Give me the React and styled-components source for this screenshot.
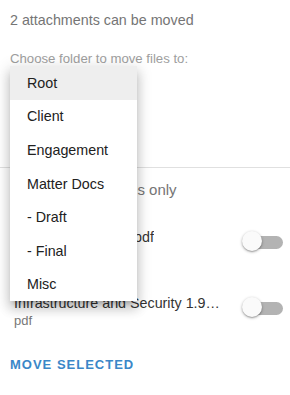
import styled, { createGlobalStyle } from 'styled-components';

const GlobalStyle = createGlobalStyle`
  html, body {
    margin: 0;
    padding: 0;
    background: #ffffff;
    font-family: "Liberation Sans", Arial, sans-serif;
  }
`;

const Page = styled.div`
  position: relative;
  width: 290px;
  height: 395px;
  overflow: hidden;
  background: #fff;
`;

const Section = styled.div`
  padding: 0 10px;
`;

const Summary = styled.div`
  padding-top: 12px;
  font-size: 14.3px;
  line-height: 16px;
  color: #757575;
`;

const FieldLabel = styled.div`
  margin-top: 24px;
  font-size: 13.2px;
  line-height: 14px;
  color: #9e9e9e;
`;

const SelectField = styled.div`
  height: 68px;
`;

const Divider = styled.hr`
  margin: 33px 0 0;
  border: none;
  border-top: 1px solid #e0e0e0;
`;

const FilterLabel = styled.div`
  padding: 13px 10px 0 14px;
  font-size: 15px;
  line-height: 18px;
  color: #757575;
`;

const FileList = styled.div`
  padding: 29px 0 0 14px;
  display: flex;
  flex-direction: column;
  gap: 30px;
`;

const FileRow = styled.div`
  display: flex;
  align-items: center;
  justify-content: space-between;
  padding-right: 7px;
`;

const FileInfo = styled.div`
  display: flex;
  flex-direction: column;
  min-width: 0;
`;

const FileName = styled.div`
  font-size: 14.3px;
  line-height: 18px;
  color: #333;
  white-space: nowrap;
  overflow: hidden;
  text-overflow: ellipsis;
  max-width: 207px;
`;

const FileType = styled.div`
  font-size: 13px;
  line-height: 18px;
  color: #777;
`;

const Switch = styled.div`
  position: relative;
  width: 36px;
  height: 13px;
  border-radius: 7px;
  background: #b3b3b3;
  flex-shrink: 0;
  margin-top: -7px;

  &::after {
    content: '';
    position: absolute;
    left: -5px;
    top: -5px;
    width: 20px;
    height: 20px;
    border-radius: 50%;
    background: #fafafa;
    box-shadow: 0 1px 3px rgba(0, 0, 0, 0.35), 0 1px 1px rgba(0, 0, 0, 0.14);
  }
`;

const MoveButton = styled.button`
  margin: 27px 0 0 10px;
  padding: 0;
  border: none;
  background: none;
  font-family: inherit;
  font-size: 13px;
  font-weight: bold;
  letter-spacing: 1px;
  color: #3a87c8;
  cursor: pointer;
`;

const Menu = styled.ul`
  position: absolute;
  left: 10px;
  top: 66px;
  width: 127px;
  margin: 0;
  padding: 0;
  list-style: none;
  background: #fff;
  box-shadow: 0 5px 5px -3px rgba(0, 0, 0, 0.2), 0 8px 10px 1px rgba(0, 0, 0, 0.14),
    0 3px 14px 2px rgba(0, 0, 0, 0.12);
`;

const MenuItem = styled.li`
  height: 33.6px;
  display: flex;
  align-items: center;
  padding-left: 17px;
  font-size: 14.3px;
  color: #212121;
  background: ${({ $active }) => ($active ? '#eeeeee' : 'transparent')};
`;

const folders = ['Root', 'Client', 'Engagement', 'Matter Docs', '- Draft', '- Final', 'Misc'];

const files = [
  { name: 'Engagement letter.pdf', type: 'pdf' },
  { name: 'Infrastructure and Security 1.9.pdf', type: 'pdf' },
];

export default function App() {
  return (
    <Page>
      <GlobalStyle />
      <Section>
        <Summary>2 attachments can be moved</Summary>
        <FieldLabel>Choose folder to move files to:</FieldLabel>
        <SelectField />
      </Section>
      <Divider />
      <FilterLabel>Show unsorted files only</FilterLabel>
      <FileList>
        {files.map((file) => (
          <FileRow key={file.name}>
            <FileInfo>
              <FileName>{file.name}</FileName>
              <FileType>{file.type}</FileType>
            </FileInfo>
            <Switch />
          </FileRow>
        ))}
      </FileList>
      <MoveButton>MOVE SELECTED</MoveButton>
      <Menu>
        {folders.map((folder, i) => (
          <MenuItem key={folder} $active={i === 0}>
            {folder}
          </MenuItem>
        ))}
      </Menu>
    </Page>
  );
}
